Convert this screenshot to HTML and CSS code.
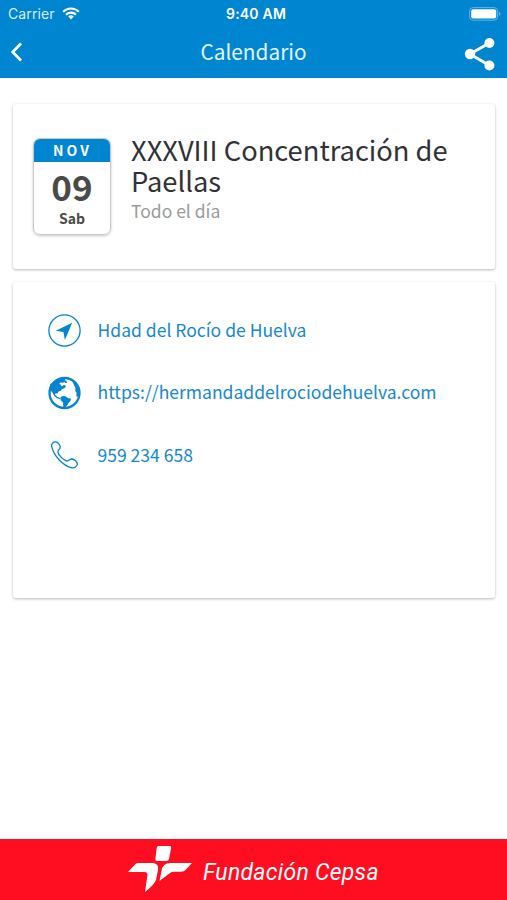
FILE: index.html
```html
<!DOCTYPE html>
<html lang="es">
<head>
<meta charset="utf-8">
<title>Calendario</title>
<link rel="stylesheet" href="styles.css">
</head>
<body>
<div class="screen">
  <header class="top">
    <div class="status">
      <div class="carrier"><span>Carrier</span>
        <svg class="wifi" width="18" height="13" viewBox="0 0 18 13" fill="none" stroke="#fff" stroke-width="2.1"><path d="M1.2 4.8a11 11 0 0 1 15.6 0M4 7.7a7 7 0 0 1 10 0"/><path d="M9 12.4L6.2 9.6a4 4 0 0 1 5.6 0Z" fill="#fff" stroke="none"/></svg>
      </div>
      <div class="clock">9:40 AM</div>
      <svg class="battery" width="32" height="14" viewBox="0 0 32 14"><rect x=".6" y=".6" width="28" height="12.6" rx="3.5" fill="none" stroke="#66b5e3"/><rect x="2.2" y="2.2" width="25" height="9.4" rx="2" fill="#fff"/><path d="M30 4.700q3 2.200 0 4.400Z" fill="#66b5e3"/></svg>
    </div>
    <nav class="nav">
      <svg class="back" width="13" height="20" viewBox="0 0 13 20"><path d="M11 1.500L2.700 10l8.300 8.500" fill="none" stroke="#fff" stroke-width="2.700"/></svg>
      <h1>Calendario</h1>
      <svg class="share" width="32" height="34" viewBox="0 0 32 34" fill="#fff"><path d="M25.400 6L6 17l19.400 11.500" fill="none" stroke="#fff" stroke-width="3"/><circle cx="25.400" cy="6" r="5"/><circle cx="6" cy="17" r="5.200"/><circle cx="25.400" cy="28.500" r="5"/></svg>
    </nav>
  </header>
  <main>
    <section class="card event">
      <div class="date">
        <div class="month">NOV</div>
        <div class="day">09</div>
        <div class="weekday">Sab</div>
      </div>
      <div class="info">
        <h2>XXXVIII Concentración de Paellas</h2>
        <p>Todo el día</p>
      </div>
    </section>
    <section class="card contact">
      <div class="row">
        <svg width="34" height="34" viewBox="0 0 34 34"><circle cx="17.500" cy="17.500" r="15.600" fill="none" stroke="#0784cf" stroke-width="1.300"/><path d="M25.200 9.800L8.800 17.800l7.600 1.200 1.500 7.900Z" fill="#0784cf"/></svg>
        <span class="place">Hdad del Rocío de Huelva</span>
      </div>
      <div class="row">
        <svg width="34" height="34" viewBox="0 0 34 34"><circle cx="17.500" cy="17" r="15" fill="none" stroke="#0784cf" stroke-width="2.300"/><path fill="#0784cf" d="M9 5L13 3l5.500-.5-.8 1.700 1.600.5.9 2.200-1.800.2-1-1.200-1.700.8-2.500-.3-1 1.500 1.500.7 1.200 1.800 1.700-1.400 1.700.3.500 1.800-1.500 1.200-2.500.9-1 1.600-2.300.8-.9 1.800-2-.2-.8 1.500 1.300.6.9 1.500 2.300.6 1.300 1-1 .7-3-1.100-2.500-2.400-2-3.500-2.600-2.300.7-5.500Z"/><path fill="#0784cf" d="M13.500 21l2.500-1 3 .5 1.800 1.600 3.200.7-.6 2.500-2.100 1.900-1 2.100-2.300 2.300-1.700-.5-.3-4.600-2.400-2.500Z"/><path fill="#0784cf" d="M25 4.500L27 9l1.500 3-.3 3 1.500 2-.5 3 1.500 1 1.800-3.500-.2-5-2.500-5Z"/></svg>
        <span class="web">https://hermandaddelrociodehuelva.com</span>
      </div>
      <div class="row">
        <svg width="34" height="34" viewBox="0 0 34 34"><path d="M4.200 8.300C3.200 5.500 6 3.600 8 3.600c2.300 0 4.900 3.200 4.700 5.600-.2 2-2.600 2.600-2.300 4.600.5 3 5.500 8.200 8.900 8.900 2.200.4 2.700-2.200 5.100-2 2.600.2 5.600 2.900 5.400 5.200-.2 2-2.900 4.300-6 3.500C15.600 27.200 6.400 18 4.200 8.300Z" transform="translate(.5 .3)" fill="none" stroke="#0784cf" stroke-width="1.300"/></svg>
        <span class="phone">959 234 658</span>
      </div>
    </section>
  </main>
  <footer>
    <svg width="64" height="48" viewBox="0 0 64 48" fill="#fff"><path d="M30.500 0h11q2 0 1.700 2L41 13q-.5 2-2.500 2H29q-2 0-1.600-2l1.300-11q.2-2 1.800-2Z"/><path d="M0 26L7.500 18Q8.500 17 10 17H25Q31 17.500 30 24L28 34Q26.500 38.500 17 46L19.500 29Q19.500 26 16.500 26Z"/><path d="M31.500 35l2-10q1-8 9-8H64L57.500 24Q56 25.700 53 25.700H46Q43.500 25.700 42 27Z"/></svg>
    <span>Fundación Cepsa</span>
  </footer>
</div>
</body>
</html>
```
FILE: styles.css
```css
* { box-sizing: border-box; }
body { margin: 0; background: #fff; font-family: "Noto Sans CJK SC", "Noto Sans", sans-serif; }
h1, h2, p { margin: 0; font-weight: 400; }
svg { display: block; flex: none; }
.screen { width: 507px; height: 900px; display: flex; flex-direction: column; }
.top { height: 78px; background: #0085d0; color: #fff; }
.status { height: 28px; padding: 0 6px 0 8px; display: grid; grid-template-columns: 1fr auto 1fr; align-items: center; font: 14px/20px Inter, sans-serif; }
.carrier { display: flex; align-items: center; gap: 7px; color: #d9edf9; letter-spacing: .1px; }
.wifi { margin-top: -2px; }
.clock { font-weight: 600; letter-spacing: .2px; padding-left: 3px; }
.battery { justify-self: end; margin-top: -1px; }
.nav { height: 50px; padding: 0 11px 0 10px; display: grid; grid-template-columns: 1fr auto 1fr; align-items: center; }
.nav h1 { font-size: 20.800px; line-height: 30px; margin-top: -5px; padding-left: 1px; color: #e3f3fc; }
.back { margin-bottom: 2px; }
.share { justify-self: end; margin-top: 2px; }
main { flex: 1; padding: 26px 12px 0 13px; display: flex; flex-direction: column; gap: 13px; }
.card { border-radius: 3px; background: #fff; box-shadow: 0 1px 3px rgba(0, 0, 0, .28); }
.event { height: 165px; padding: 34px 20px 0; display: flex; gap: 20px; }
.date { width: 78px; height: 97px; border: 1px solid #c8c8c8; border-radius: 7px; overflow: hidden; box-shadow: 0 1px 3px rgba(0, 0, 0, .22); text-align: center; color: #4a4a4a; font-weight: 700; }
.month { height: 23px; background: #0085d0; color: #fff; font-size: 14px; line-height: 23px; letter-spacing: 3px; padding-left: 1px; }
.day { font-size: 35px; line-height: 48px; }
.weekday { font-size: 14px; line-height: 18px; margin-top: -1px; }
.info { flex: 1; }
.info h2 { font-size: 27.300px; line-height: 31px; color: #303237; margin-top: -4px; }
.info p { font-size: 17.500px; line-height: 28px; margin-top: 1px; color: #9b9b9b; }
.contact { height: 316px; padding: 31px 34px 0; display: flex; flex-direction: column; gap: 28.500px; }
.row { display: flex; align-items: center; gap: 16px; height: 34px; color: #1688cf; font-size: 17.550px; line-height: 28px; white-space: nowrap; }
.row span { margin: -1px 0 0 .5px; }
footer { height: 61px; background: #ff0d21; color: #fff; display: flex; align-items: center; padding-left: 128px; gap: 11px; font: italic 23px/30px Roboto, sans-serif; letter-spacing: .27px; white-space: nowrap; }
footer span { margin-top: 6px; }
```
